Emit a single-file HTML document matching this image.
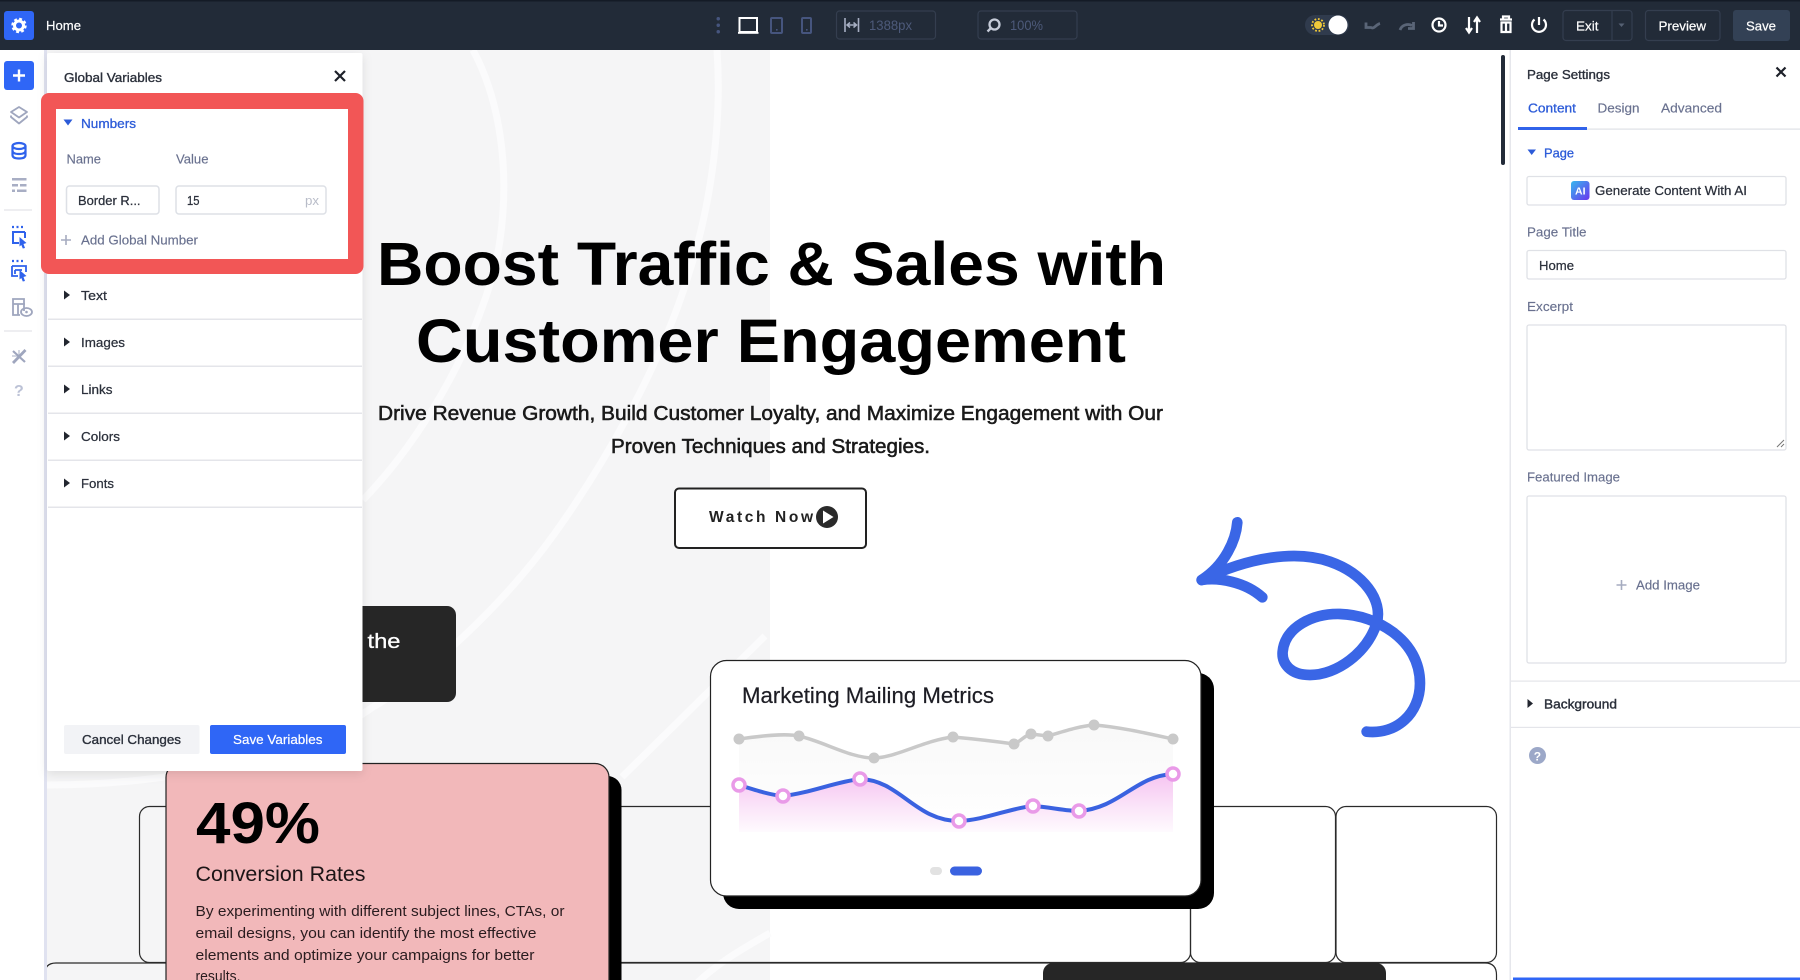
<!DOCTYPE html>
<html lang="en"><head><meta charset="utf-8"><title>Home - Global Variables</title>
<style>
html,body{margin:0;padding:0;background:#fff;width:1800px;height:980px;overflow:hidden}
svg{display:block}
text{font-family:"Liberation Sans",sans-serif;white-space:pre}
.ui{font-size:13px;fill:#2b303b;stroke:#2b303b;stroke-width:.25}
.lbl{font-size:13px;fill:#69718f;stroke:#69718f;stroke-width:.15}
.blue{font-size:13px;fill:#2c5bd8;stroke:#2c5bd8;stroke-width:.3}
.wh{font-size:13px;fill:#fff;stroke:#fff;stroke-width:.2}
.dim{font-size:13px;fill:#4d5a7a}
.ct{fill:#000}
</style></head><body>
<svg xmlns="http://www.w3.org/2000/svg" width="1800" height="980" viewBox="0 0 1800 980">
<defs>
<filter id="sh" x="-10%" y="-10%" width="120%" height="120%"><feDropShadow dx="0" dy="3" stdDeviation="5" flood-color="#000" flood-opacity=".1"/></filter>
<linearGradient id="pk" x1="0" y1="774" x2="0" y2="832" gradientUnits="userSpaceOnUse"><stop offset="0" stop-color="#f6c4f1"/><stop offset=".6" stop-color="#fbe6f9"/><stop offset="1" stop-color="#fefafe"/></linearGradient>
<linearGradient id="gy" x1="0" y1="735" x2="0" y2="835" gradientUnits="userSpaceOnUse"><stop offset="0" stop-color="#f9f9f9"/><stop offset="1" stop-color="#fff"/></linearGradient>
<linearGradient id="ai" x1="0" y1="0" x2="1" y2="1"><stop offset="0" stop-color="#37b7ee"/><stop offset="1" stop-color="#6b35ee"/></linearGradient>
</defs>
<rect width="1800" height="980" fill="#fff"/>
<!-- canvas -->
<rect x="47" y="50" width="723" height="930" fill="#f5f5f6"/>
<g fill="none" stroke="#fbfbfc" stroke-width="7">
<path d="M473 50C500 100 510 170 500 240C490 310 440 420 363 500"/>
<path d="M717 50C722 120 712 200 690 270C660 370 600 470 555 533C500 610 420 680 373 707C320 745 200 785 47 785"/>
<path d="M765 636C720 680 670 730 622 777"/>
<path d="M770 933C740 950 715 965 695 985"/>
</g>
<!-- heading -->
<text x="377" y="285" font-size="61" font-weight="700" class="ct" textLength="789" lengthAdjust="spacingAndGlyphs">Boost Traffic &amp; Sales with</text>
<text x="416" y="362" font-size="61" font-weight="700" class="ct" textLength="710" lengthAdjust="spacingAndGlyphs">Customer Engagement</text>
<text x="378" y="420" font-size="20" fill="#1a1a1a" stroke="#1a1a1a" stroke-width=".55" textLength="785" lengthAdjust="spacingAndGlyphs">Drive Revenue Growth, Build Customer Loyalty, and Maximize Engagement with Our</text>
<text x="611" y="453" font-size="20" fill="#1a1a1a" stroke="#1a1a1a" stroke-width=".55" textLength="319" lengthAdjust="spacingAndGlyphs">Proven Techniques and Strategies.</text>
<rect x="675" y="488.500" width="191" height="59.500" rx="4" fill="#fff" stroke="#222" stroke-width="2"/>
<text x="709" y="522" font-size="15.500" font-weight="700" fill="#222" textLength="104" lengthAdjust="spacing">Watch Now</text>
<circle cx="827" cy="517" r="11" fill="#2a2a2a"/><path d="M823 510.500L833.500 517L823 523.500Z" fill="#fff"/>
<!-- dark card -->
<rect x="300" y="606" width="156" height="96" rx="9" fill="#262626"/>
<text x="367.500" y="648" font-size="20" fill="#fff" stroke="#fff" stroke-width=".3" textLength="33" lengthAdjust="spacingAndGlyphs">the</text>
<!-- arrow -->
<g transform="translate(1150 490) scale(.3333)" fill="none" stroke="#3a66e6" stroke-width="32" stroke-linecap="round" stroke-linejoin="round">
<path d="M262 97C258 150 225 225 155 270C205 262 285 275 337 322"/>
<path d="M155 270C300 200 440 180 540 215C640 250 700 330 680 400C650 490 560 555 480 555C420 555 395 520 398 485C405 410 490 370 570 372C680 375 810 450 810 580C810 670 740 735 650 725"/>
</g>
<!-- grid boxes -->
<g fill="none" stroke="#2a2a2a" stroke-width="1.200">
<rect x="139.500" y="806.500" width="1051" height="156" rx="10"/>
<rect x="1190.500" y="806.500" width="145" height="156" rx="10"/>
<rect x="1336" y="806.500" width="160.500" height="156" rx="10"/>
<path d="M44.500 985V975Q44.500 963 56 963H1485Q1496.500 963 1496.500 975V985"/>
</g>
<rect x="1043" y="963" width="343" height="30" rx="10" fill="#262626"/>
<!-- metrics card -->
<rect x="723" y="673" width="491" height="236" rx="16" fill="#000"/>
<rect x="710.500" y="660.500" width="490.500" height="235.500" rx="16" fill="#fff" stroke="#222" stroke-width="1.200"/>
<text x="742" y="703" font-size="22" fill="#1d1d24" stroke="#1d1d24" stroke-width=".2" textLength="252" lengthAdjust="spacingAndGlyphs">Marketing Mailing Metrics</text>
<path d="M739 739C760 736 785 733 799 736C825 742 850 758 874 758C895 758 925 740 953 737C975 739 1000 742 1014 744C1020 742 1025 735 1031 734L1048 736C1065 731 1080 726 1094 725C1120 727 1150 734 1173 739V835H739Z" fill="url(#gy)"/>
<path d="M739 785C755 790 770 795 783 796C810 793 835 782 860 779C900 780 915 821 959 821C985 820 1010 808 1033 806C1050 807 1065 811 1079 811C1120 808 1135 776 1173 774V832H739Z" fill="url(#pk)"/>
<path d="M739 739C760 736 785 733 799 736C825 742 850 758 874 758C895 758 925 740 953 737C975 739 1000 742 1014 744C1020 742 1025 735 1031 734L1048 736C1065 731 1080 726 1094 725C1120 727 1150 734 1173 739" fill="none" stroke="#c9c9c9" stroke-width="3.500"/>
<g fill="#c9c9c9"><circle cx="739" cy="739" r="5.500"/><circle cx="799" cy="736" r="5.500"/><circle cx="874" cy="758" r="5.500"/><circle cx="953" cy="737" r="5.500"/><circle cx="1014" cy="744" r="5.500"/><circle cx="1031" cy="734" r="5.500"/><circle cx="1048" cy="736" r="5.500"/><circle cx="1094" cy="725" r="5.500"/><circle cx="1173" cy="739" r="5.500"/></g>
<path d="M739 785C755 790 770 795 783 796C810 793 835 782 860 779C900 780 915 821 959 821C985 820 1010 808 1033 806C1050 807 1065 811 1079 811C1120 808 1135 776 1173 774" fill="none" stroke="#3a62e0" stroke-width="4"/>
<g fill="#fff" stroke="#e99ae8" stroke-width="3.500"><circle cx="739" cy="785" r="6"/><circle cx="783" cy="796" r="6"/><circle cx="860" cy="779" r="6"/><circle cx="959" cy="821" r="6"/><circle cx="1033" cy="806" r="6"/><circle cx="1079" cy="811" r="6"/><circle cx="1173" cy="774" r="6"/></g>
<rect x="930" y="867" width="12" height="8" rx="4" fill="#e2e2e2"/><rect x="950" y="866.500" width="32" height="9" rx="4.500" fill="#3a62e0"/>
<!-- pink card -->
<rect x="179" y="776" width="442.500" height="240" rx="14" fill="#000"/>
<rect x="166" y="763.500" width="443" height="240" rx="14" fill="#f2b8ba" stroke="#222" stroke-width="1.200"/>
<text x="196" y="843" font-size="58" font-weight="700" fill="#000" textLength="124" lengthAdjust="spacingAndGlyphs">49%</text>
<text x="195.500" y="881" font-size="21" fill="#1c1416" textLength="170" lengthAdjust="spacingAndGlyphs">Conversion Rates</text>
<g font-size="15" fill="#2a1c1f">
<text x="195.500" y="916" textLength="369" lengthAdjust="spacingAndGlyphs">By experimenting with different subject lines, CTAs, or</text>
<text x="195.500" y="938" textLength="341" lengthAdjust="spacingAndGlyphs">email designs, you can identify the most effective</text>
<text x="195.500" y="960" textLength="339" lengthAdjust="spacingAndGlyphs">elements and optimize your campaigns for better</text>
<text x="195.500" y="981" textLength="45" lengthAdjust="spacingAndGlyphs">results.</text>
</g>
<!-- scrollbar -->
<rect x="1501" y="55" width="4" height="110" rx="2" fill="#222b38"/>
<!-- left sidebar -->
<rect x="0" y="50" width="44" height="930" fill="#fff"/>
<rect x="44" y="50" width="3" height="930" fill="#e0e2f0"/>
<rect x="4" y="61" width="30" height="29" rx="3" fill="#2f66f6"/>
<path d="M19 69.500V81.500M13 75.500H25" stroke="#fff" stroke-width="2.400"/>
<g fill="none" stroke="#9fa6be" stroke-width="1.800" stroke-linejoin="round"><path d="M19 107L27 112L19 117.500L11 112Z"/><path d="M11 115.500V117L19 123.500L27 117V115.500"/></g>
<g fill="none" stroke="#2f62ec" stroke-width="2.200"><ellipse cx="19" cy="146" rx="6.500" ry="3"/><path d="M12.500 146V155Q12.500 158.500 19 158.500T25.500 155V146M12.500 151Q13 154 19 154T25.500 151"/></g>
<g fill="#a8aec4"><rect x="12" y="178" width="14.500" height="2.500"/><rect x="12" y="184" width="6" height="2.500"/><rect x="20" y="184" width="6.500" height="2.500"/><rect x="12" y="189.500" width="3" height="2.500"/><rect x="17" y="189.500" width="9.500" height="2.500"/></g>
<rect x="4" y="209.500" width="28" height="1" fill="#dcdde3"/>
<g fill="none" stroke="#2f62ec" stroke-width="2"><path d="M25 232H13V243H19"/><path d="M25 232V238"/><path d="M12 227h2M16.500 227h2M21 227h2" stroke-width="2.200"/></g>
<path d="M19.500 237L26.500 243L23.500 244L25 248L22.800 248.500L21.300 245L19.500 246.500Z" fill="#2f62ec"/>
<g fill="none" stroke="#2f62ec" stroke-width="1.800"><path d="M12 266H26V272M12 266V276H18M15 270H22M15 270V274"/><path d="M12 261h2M16.500 261h2M21 261h2" stroke-width="2.200"/></g>
<path d="M19.500 270L26.500 276L23.500 277L25 281L22.800 281.500L21.300 278L19.500 279.500Z" fill="#2f62ec"/>
<g fill="none" stroke="#9fa6be" stroke-width="1.800"><path d="M24 311V299H13V315H20M13 304H25M18 304V315"/><ellipse cx="26.500" cy="312" rx="5.500" ry="4"/></g><circle cx="26.500" cy="312" r="1.300" fill="#9fa6be"/>
<rect x="4" y="330.500" width="28" height="1" fill="#dcdde3"/>
<g stroke="#9fa6be" fill="none"><path d="M13 351L25 362" stroke-width="2.200"/><path d="M25.500 350L13 363" stroke-width="2.800"/><path d="M19 350V358M12 356H18" stroke-width="1.500" opacity=".6"/></g>
<text x="14" y="396" font-size="16" fill="#bcc2d6" font-weight="700">?</text>
<!-- global variables panel -->
<rect x="47" y="53" width="315.500" height="718" rx="2" fill="#fff" filter="url(#sh)"/>
<text x="64" y="82" class="ui" textLength="98" lengthAdjust="spacingAndGlyphs" style="stroke-width:.35">Global Variables</text>
<path d="M335 71L345 81M345 71L335 81" stroke="#1d2029" stroke-width="2.200"/>
<rect x="41" y="93" width="322.500" height="181" rx="8" fill="#f25656"/>
<rect x="56" y="109" width="292" height="150" fill="#fff"/>
<path d="M63.500 119.500H72.500L68 125.500Z" fill="#2c5bd8"/>
<text x="81" y="128" class="blue" textLength="55" lengthAdjust="spacingAndGlyphs">Numbers</text>
<text x="66.500" y="163.500" class="lbl" textLength="34.500" lengthAdjust="spacingAndGlyphs">Name</text>
<text x="176" y="163.500" class="lbl" textLength="32.500" lengthAdjust="spacingAndGlyphs">Value</text>
<rect x="66.500" y="186" width="92.500" height="28" rx="3" fill="#fff" stroke="#dde0e6" stroke-width="1.500"/>
<rect x="176" y="186" width="150" height="28" rx="3" fill="#fff" stroke="#dde0e6" stroke-width="1.500"/>
<text x="78" y="205" class="ui" textLength="62.500" lengthAdjust="spacingAndGlyphs">Border R...</text>
<text x="187" y="205" class="ui" textLength="12.500" lengthAdjust="spacingAndGlyphs">15</text>
<text x="305" y="205" font-size="13" fill="#b8bcc8" textLength="14" lengthAdjust="spacingAndGlyphs">px</text>
<path d="M66 235V245M61 240H71" stroke="#a6acc0" stroke-width="1.600"/>
<text x="81" y="244.500" class="lbl" textLength="117" lengthAdjust="spacingAndGlyphs">Add Global Number</text>
<g class="tri" fill="#22262f"><path d="M64 290.500L70 295L64 299.500Z"/><path d="M64 337.500L70 342L64 346.500Z"/><path d="M64 384.500L70 389L64 393.500Z"/><path d="M64 431.500L70 436L64 440.500Z"/><path d="M64 478.500L70 483L64 487.500Z"/></g>
<text x="81" y="300" class="ui" textLength="26" lengthAdjust="spacingAndGlyphs">Text</text>
<text x="81" y="347" class="ui" textLength="44" lengthAdjust="spacingAndGlyphs">Images</text>
<text x="81" y="394" class="ui" textLength="31.500" lengthAdjust="spacingAndGlyphs">Links</text>
<text x="81" y="441" class="ui" textLength="39" lengthAdjust="spacingAndGlyphs">Colors</text>
<text x="81" y="488" class="ui" textLength="33" lengthAdjust="spacingAndGlyphs">Fonts</text>
<g fill="#e4e5ea"><rect x="48" y="318.500" width="314" height="1.500"/><rect x="48" y="365.500" width="314" height="1.500"/><rect x="48" y="412.500" width="314" height="1.500"/><rect x="48" y="459.500" width="314" height="1.500"/><rect x="48" y="506.500" width="314" height="1.500"/></g>
<rect x="64" y="725" width="135.500" height="29" rx="2" fill="#f2f3f6"/>
<text x="82" y="744" class="ui" textLength="99" lengthAdjust="spacingAndGlyphs" style="stroke-width:.35">Cancel Changes</text>
<rect x="210" y="725" width="136" height="29" rx="2" fill="#2f66f6"/>
<text x="233" y="744" class="wh" textLength="89.500" lengthAdjust="spacingAndGlyphs">Save Variables</text>
<!-- top bar -->
<rect x="0" y="0" width="1800" height="50" fill="#222b38"/>
<rect x="0" y="0" width="1800" height="1.500" fill="#141b26"/>
<rect x="4" y="11" width="30" height="29" rx="3" fill="#2f66f6"/>
<circle cx="19" cy="25.500" r="4.500" fill="none" stroke="#fff" stroke-width="3"/>
<circle cx="19" cy="25.500" r="6.500" fill="none" stroke="#fff" stroke-width="2.400" stroke-dasharray="2.800 2.300"/>
<text x="46" y="30" class="wh" font-size="14" textLength="35" lengthAdjust="spacingAndGlyphs">Home</text>
<g fill="#46557e"><rect x="716.500" y="17" width="3.500" height="3.500" rx="1.700"/><rect x="716.500" y="23.500" width="3.500" height="3.500" rx="1.700"/><rect x="716.500" y="30" width="3.500" height="3.500" rx="1.700"/></g>
<rect x="739.500" y="18" width="17.500" height="14" fill="none" stroke="#fff" stroke-width="2"/><rect x="738" y="32" width="20.500" height="1.800" fill="#fff"/>
<g fill="none" stroke="#46557e" stroke-width="2"><rect x="771" y="18" width="11" height="15" rx="1"/><rect x="802" y="18" width="9" height="15" rx="1"/></g>
<g fill="#46557e"><rect x="776" y="29" width="1.600" height="1.600"/><rect x="806" y="29" width="1.600" height="1.600"/></g>
<g fill="none" stroke="#343e4f" stroke-width="1.200"><rect x="836.500" y="11" width="99" height="28" rx="3"/><rect x="978" y="11" width="99" height="28" rx="3"/></g>
<path d="M845 18V32M858.500 18V32" stroke="#a7afc3" stroke-width="1.600"/><path d="M847 25H856.500M850 22.500L847 25L850 27.500M853.500 22.500L856.500 25L853.500 27.500" stroke="#a7afc3" stroke-width="1.500" fill="none"/>
<text x="869" y="30" class="dim" style="font-size:14px" textLength="43" lengthAdjust="spacingAndGlyphs">1388px</text>
<circle cx="994.500" cy="24.500" r="5" fill="none" stroke="#c5cbd8" stroke-width="2.300"/><path d="M990.500 28.500L987.500 31.500" stroke="#c5cbd8" stroke-width="2.300"/>
<text x="1010" y="30" class="dim" style="font-size:14px" textLength="33" lengthAdjust="spacingAndGlyphs">100%</text>
<rect x="1305" y="15" width="44" height="20" rx="10" fill="#303b4d"/>
<circle cx="1318" cy="25" r="4" fill="#f0c93a"/><circle cx="1318" cy="25" r="6" fill="none" stroke="#f0c93a" stroke-width="1.800" stroke-dasharray="1.800 1.700"/>
<circle cx="1338" cy="25" r="9.500" fill="#fff"/>
<g fill="none" stroke="#5a6577" stroke-width="2.800"><path d="M1366 22.500V27.500H1371C1374 29.500 1376 24.500 1380 23.500"/><path d="M1400 30C1402 24.500 1408 23.500 1412 25.500M1413.500 22V28.500H1408"/></g>
<g fill="none" stroke="#fff" stroke-width="2.200"><circle cx="1439" cy="25" r="6.500"/><path d="M1439 21V25.500H1443"/><path d="M1469 17V32M1466 28L1469 32.500L1472 28M1477 33V18M1474 22L1477 17.500L1480 22"/><path d="M1500 19.500H1512M1503 19V16.500H1509V19M1501.500 22.500H1510.500V32H1501.500ZM1506 23V32"/><path d="M1539 17V25M1534.500 19.500A7 7 0 1 0 1543.500 19.500"/></g>
<g fill="none" stroke="#343e4f" stroke-width="1.200"><rect x="1563" y="10.500" width="69" height="30" rx="3"/><path d="M1612 10.500V40.500"/><rect x="1645.500" y="10.500" width="74.500" height="30" rx="3"/></g>
<text x="1576" y="30.500" class="wh" textLength="22.500" lengthAdjust="spacingAndGlyphs">Exit</text>
<path d="M1618.500 23.500H1624.500L1621.500 27Z" fill="#566173"/>
<text x="1658.500" y="30.500" class="wh" textLength="47.500" lengthAdjust="spacingAndGlyphs">Preview</text>
<rect x="1733" y="10" width="57" height="31" rx="3" fill="#334155"/>
<text x="1746" y="30.500" class="wh" textLength="30" lengthAdjust="spacingAndGlyphs">Save</text>
<!-- right panel -->
<rect x="1510" y="50" width="290" height="930" fill="#fff"/>
<rect x="1509.500" y="50" width="1.500" height="930" fill="#e6e7ec"/>
<text x="1527" y="79" class="ui" textLength="83" lengthAdjust="spacingAndGlyphs" style="stroke-width:.35">Page Settings</text>
<path d="M1776.500 67.500L1785.500 76.500M1785.500 67.500L1776.500 76.500" stroke="#1d2029" stroke-width="2.200"/>
<text x="1528" y="112.500" class="blue" textLength="48" lengthAdjust="spacingAndGlyphs">Content</text>
<text x="1597.500" y="112.500" class="lbl" textLength="42" lengthAdjust="spacingAndGlyphs">Design</text>
<text x="1661" y="112.500" class="lbl" textLength="61" lengthAdjust="spacingAndGlyphs">Advanced</text>
<rect x="1518" y="128.500" width="282" height="1.200" fill="#dfe1e6"/>
<rect x="1518" y="127" width="69" height="3" fill="#3163ea"/>
<path d="M1527.500 149.500H1536L1531.700 155Z" fill="#2c5bd8"/>
<text x="1544" y="157.500" class="blue" textLength="30" lengthAdjust="spacingAndGlyphs">Page</text>
<rect x="1527" y="176.500" width="259" height="28.500" rx="2" fill="#fff" stroke="#dfe1e6" stroke-width="1.300"/>
<rect x="1571" y="181" width="18.500" height="19" rx="3" fill="url(#ai)"/>
<text x="1575" y="194.500" font-size="10.500" font-weight="700" fill="#fff">AI</text>
<text x="1595" y="195" class="ui" textLength="152" lengthAdjust="spacingAndGlyphs">Generate Content With AI</text>
<text x="1527" y="236.500" class="lbl" textLength="59.500" lengthAdjust="spacingAndGlyphs">Page Title</text>
<rect x="1527" y="250.500" width="259" height="28.500" rx="2" fill="#fff" stroke="#dfe1e6" stroke-width="1.300"/>
<text x="1539" y="270" class="ui" textLength="35" lengthAdjust="spacingAndGlyphs">Home</text>
<text x="1527" y="311" class="lbl" textLength="46" lengthAdjust="spacingAndGlyphs">Excerpt</text>
<rect x="1527" y="325" width="259" height="125" rx="2" fill="#fff" stroke="#dfe1e6" stroke-width="1.300"/>
<path d="M1777 447L1784 440M1781 447L1784 444" stroke="#777" stroke-width="1"/>
<text x="1527" y="481.500" class="lbl" textLength="93" lengthAdjust="spacingAndGlyphs">Featured Image</text>
<rect x="1527" y="496" width="259" height="167" rx="2" fill="#fff" stroke="#dfe1e6" stroke-width="1.300"/>
<path d="M1621.500 580V590M1616.500 585H1626.500" stroke="#a6acc0" stroke-width="1.600"/>
<text x="1636" y="589.500" class="lbl" textLength="64" lengthAdjust="spacingAndGlyphs">Add Image</text>
<rect x="1511" y="680.500" width="289" height="1.200" fill="#e4e5ea"/>
<path d="M1527.500 699L1533 703.500L1527.500 708Z" fill="#22262f"/>
<text x="1544" y="708.500" class="ui" textLength="73" lengthAdjust="spacingAndGlyphs" style="stroke-width:.4">Background</text>
<rect x="1511" y="726.800" width="289" height="1.200" fill="#e4e5ea"/>
<circle cx="1537.500" cy="755.500" r="8.500" fill="#9ca8c8"/>
<text x="1533.800" y="760.500" font-size="12" font-weight="700" fill="#fff">?</text>
<rect x="1513" y="977.500" width="287" height="2.500" fill="#2f66f6"/>
</svg>
</body></html>
